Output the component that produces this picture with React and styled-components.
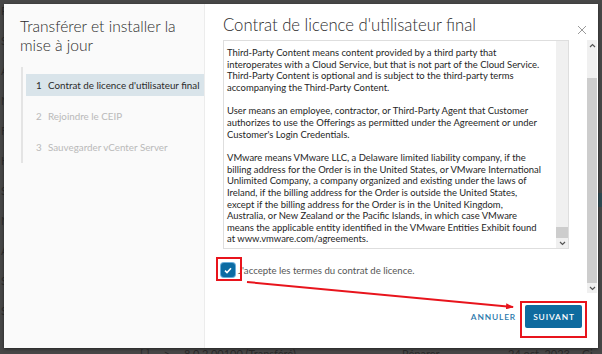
import React from 'react';
import styled, { createGlobalStyle } from 'styled-components';

const Global = createGlobalStyle`
  html, body { margin: 0; padding: 0; width: 602px; height: 354px; overflow: hidden; }
  body { font-family: Lato, "Open Sans", sans-serif; }
  * { box-sizing: border-box; }
`;

const Screen = styled.div`
  position: relative;
  width: 602px;
  height: 354px;
  background: #474747;
  overflow: hidden;
`;

/* ---------- page behind the dimmed overlay ---------- */
const BackPage = styled.div`
  display: flex;
  height: 100%;
`;
const BackNav = styled.div`
  display: flex;
  flex-direction: column;
  gap: 17px;
  padding: 4px 0 0 1px;
  width: 80px;
  font-size: 11px;
  color: #2c2c2c;
`;
const BackMain = styled.div`
  flex: 1;
  display: flex;
  flex-direction: column;
  justify-content: flex-end;
`;
const BackRow = styled.div`
  display: grid;
  grid-template-columns: 322px 106px 74px 1fr;
  height: 7px;
  font-size: 11px;
  line-height: 14px;
  color: #2a2a2a;
  overflow: visible;
  white-space: nowrap;
`;
const BackCell = styled.span`
  display: flex;
  gap: 14px;
  padding-left: ${p => p.$pad || 0}px;
`;
const SelectedBand = styled.div`
  position: absolute;
  right: 0;
  top: 193px;
  width: 4px;
  height: 14px;
  background: #2f4a52;
`;

/* ---------- modal ---------- */
const Modal = styled.div`
  position: absolute;
  left: 4px;
  top: 4px;
  width: 594px;
  height: 344px;
  display: flex;
  background: #fff;
  box-shadow: 0 1px 3px rgba(0, 0, 0, 0.5);
`;

const Sidebar = styled.aside`
  width: 201px;
  flex: none;
  background: #fafafa;
  border-right: 1px solid #ececec;
  padding: 13px 0 0 16px;
`;
const SideTitle = styled.h2`
  margin: 0;
  font-size: 15.6px;
  line-height: 18.5px;
  font-weight: 300;
  color: #2b2b2b;
`;
const StepList = styled.ol`
  list-style: none;
  margin: 13px 0 0 1px;
  padding: 7px 0 5px 3px;
  border-left: 2px solid #e4e4e4;
  display: flex;
  flex-direction: column;
  gap: 9px;
`;
const Step = styled.li`
  height: 22px;
  display: flex;
  align-items: center;
  padding-left: 10px;
  font-size: 9.8px;
  color: ${p => (p.$active ? '#2b2b2b' : '#b9b9b9')};
  background: ${p => (p.$active ? '#d9e4ea' : 'transparent')};
`;
const StepNum = styled.span`
  width: 12px;
  flex: none;
`;

const Main = styled.section`
  flex: 1;
  display: flex;
  flex-direction: column;
  min-width: 0;
`;
const Header = styled.header`
  height: 36px;
  display: flex;
  align-items: flex-start;
  justify-content: space-between;
  padding: 12px 11px 0 18px;
`;
const Title = styled.h3`
  margin: 0;
  font-size: 16.7px;
  line-height: 19px;
  font-weight: 300;
  color: #2b2b2b;
`;
const Close = styled.button`
  border: 0;
  background: none;
  padding: 0;
  margin-top: 9px;
  width: 10px;
  height: 10px;
  display: flex;
  cursor: pointer;
`;

const Body = styled.div`
  height: 253px;
  display: flex;
`;
const BodyContent = styled.div`
  flex: 1;
  padding-left: 18px;
`;
const Eula = styled.div`
  width: 346px;
  height: 209px;
  border: 1px solid #dedede;
  display: flex;
`;
const EulaText = styled.div`
  flex: 1;
  padding: 6px 0 0 3px;
  font-size: 9.45px;
  line-height: 11.65px;
  color: #262626;
  overflow: hidden;
`;
const Para = styled.p`
  margin: 0 0 11.65px;
`;
const Line = styled.span`
  display: block;
  white-space: nowrap;
`;

const ScrollTrack = styled.div`
  width: ${p => p.$w}px;
  flex: none;
  background: #f0f0f0;
  display: flex;
  flex-direction: column;
`;
const ScrollArrow = styled.div`
  height: 10px;
  flex: none;
  display: flex;
  align-items: center;
  justify-content: center;
`;
const ScrollSpace = styled.div`
  height: ${p => p.$h}px;
  flex: none;
`;
const ScrollThumb = styled.div`
  flex: ${p => (p.$grow ? 1 : 'none')};
  height: ${p => (p.$h ? `${p.$h}px` : 'auto')};
  background: #cdcdcd;
`;

const AcceptRow = styled.label`
  display: flex;
  align-items: center;
  gap: 3px;
  margin: 14px 0 0 -2px;
  font-size: 9.6px;
  color: #565656;
`;
const Check = styled.span`
  width: 14px;
  height: 14px;
  border-radius: 3px;
  background: #0b6ba3;
  box-shadow: 0 0 0 1px #6aaedb;
  display: flex;
  align-items: center;
  justify-content: center;
`;

const OuterScroll = styled.div`
  width: 10px;
  margin-right: 1px;
  flex: none;
  background: #f0f0f0;
  display: flex;
  flex-direction: column;
`;

const Footer = styled.footer`
  flex: 1;
  display: flex;
  justify-content: flex-end;
  align-items: flex-start;
  gap: 9px;
  padding: 12px 16px 0 0;
`;
const FlatButton = styled.button`
  border: 0;
  background: none;
  height: 23px;
  padding: 0;
  font-family: Lato, sans-serif;
  font-size: 8.4px;
  font-weight: 600;
  letter-spacing: 0.85px;
  color: #2a78ab;
`;
const PrimaryButton = styled.button`
  border: 0;
  background: #0e6b9f;
  color: #fff;
  width: 57px;
  height: 23px;
  padding: 0 0 0 1px;
  border-radius: 2px;
  font-family: Lato, sans-serif;
  font-size: 8.4px;
  font-weight: 600;
  letter-spacing: 0.85px;
`;

const Annotations = styled.svg`
  position: absolute;
  left: 0;
  top: 0;
  width: 602px;
  height: 354px;
  pointer-events: none;
`;

const Chevron = ({ up }) => (
  <svg width="7" height="5" viewBox="0 0 7 5">
    <path d={up ? 'M1 4 L3.5 1.5 L6 4' : 'M1 1 L3.5 3.5 L6 1'} fill="none" stroke="#555" strokeWidth="1.2" />
  </svg>
);

const paras = [
  [
    'Third-Party Content means content provided by a third party that',
    'interoperates with a Cloud Service, but that is not part of the Cloud Service.',
    'Third-Party Content is optional and is subject to the third-party terms',
    'accompanying the Third-Party Content.',
  ],
  [
    'User means an employee, contractor, or Third-Party Agent that Customer',
    'authorizes to use the Offerings as permitted under the Agreement or under',
    "Customer's Login Credentials.",
  ],
  [
    'VMware means VMware LLC, a Delaware limited liability company, if the',
    'billing address for the Order is in the United States, or VMware International',
    'Unlimited Company, a company organized and existing under the laws of',
    'Ireland, if the billing address for the Order is outside the United States,',
    'except if the billing address for the Order is in the United Kingdom,',
    'Australia, or New Zealand or the Pacific Islands, in which case VMware',
    'means the applicable entity identified in the VMware Entities Exhibit found',
    'at www.vmware.com/agreements.',
  ],
];

export default function App() {
  return (
    <Screen>
      <Global />
      <BackPage>
        <BackNav>
          {['Résumé', 'Surveiller', 'Alarmes', 'Mises à jour', 'Fichiers', 'Hôtes', 'Sauvegarde', 'Mises', 'Accès', 'Services', 'Syslog'].map(t => (
            <span key={t}>{t}</span>
          ))}
        </BackNav>
        <BackMain>
          <BackRow>
            <BackCell $pad={60}>
              <span>[ ]</span>
              <span>&gt;</span>
              <span>8.0.2.00100 (Transféré)</span>
            </BackCell>
            <BackCell>Réparer</BackCell>
            <BackCell>24 oct. 2023</BackCell>
            <BackCell>Gi</BackCell>
          </BackRow>
        </BackMain>
      </BackPage>
      <SelectedBand />

      <Modal>
        <Sidebar>
          <SideTitle>Transférer et installer la mise à jour</SideTitle>
          <StepList>
            <Step $active><StepNum>1</StepNum>Contrat de licence d'utilisateur final</Step>
            <Step><StepNum>2</StepNum>Rejoindre le CEIP</Step>
            <Step><StepNum>3</StepNum>Sauvegarder vCenter Server</Step>
          </StepList>
        </Sidebar>

        <Main>
          <Header>
            <Title>Contrat de licence d'utilisateur final</Title>
            <Close aria-label="Fermer">
              <svg width="10" height="10" viewBox="0 0 10 10">
                <path d="M1 1 L9 9 M9 1 L1 9" stroke="#9a9a9a" strokeWidth="1" />
              </svg>
            </Close>
          </Header>

          <Body>
            <BodyContent>
              <Eula>
                <EulaText>
                  {paras.map((p, i) => (
                    <Para key={i}>
                      {p.map(l => <Line key={l}>{l}</Line>)}
                    </Para>
                  ))}
                </EulaText>
                <ScrollTrack $w={12}>
                  <ScrollSpace $h={186} />
                  <ScrollThumb $h={11} />
                  <ScrollArrow><Chevron /></ScrollArrow>
                </ScrollTrack>
              </Eula>
              <AcceptRow>
                <Check>
                  <svg width="8" height="7" viewBox="0 0 8 7">
                    <path d="M1 3.6 L3 5.5 L7 1.2" fill="none" stroke="#fff" strokeWidth="1.6" />
                  </svg>
                </Check>
                J'accepte les termes du contrat de licence.
              </AcceptRow>
            </BodyContent>
            <OuterScroll>
              <ScrollArrow><Chevron up /></ScrollArrow>
              <ScrollSpace $h={28} />
              <ScrollThumb $grow />
              <ScrollArrow><Chevron /></ScrollArrow>
            </OuterScroll>
          </Body>

          <Footer>
            <FlatButton>ANNULER</FlatButton>
            <PrimaryButton>SUIVANT</PrimaryButton>
          </Footer>
        </Main>
      </Modal>

      <Annotations viewBox="0 0 602 354">
        <defs>
          <marker id="head" markerWidth="8" markerHeight="6" refX="7" refY="3" orient="auto" markerUnits="userSpaceOnUse">
            <path d="M0 0 L8 3 L0 6 Z" fill="#e8141c" />
          </marker>
        </defs>
        <rect x="217" y="258" width="24" height="22" fill="none" stroke="#e8141c" strokeWidth="2" />
        <rect x="521" y="302" width="65" height="35" fill="none" stroke="#e8141c" strokeWidth="2" />
        <line x1="247" y1="282" x2="513" y2="307" stroke="#e8141c" strokeWidth="2" markerEnd="url(#head)" />
      </Annotations>
    </Screen>
  );
}
